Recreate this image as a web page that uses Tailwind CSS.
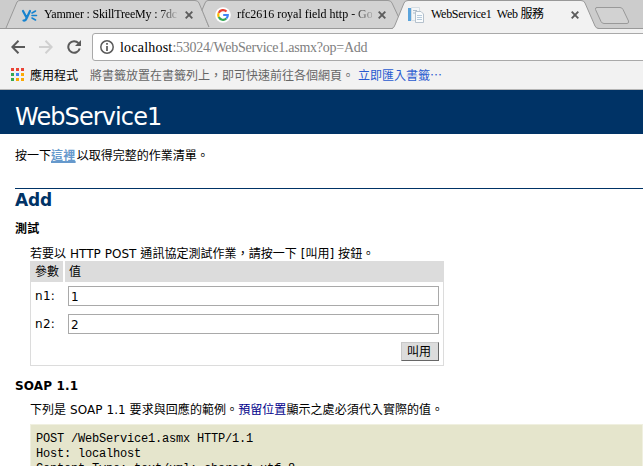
<!DOCTYPE html>
<html lang="zh-Hant">
<head>
<meta charset="utf-8">
<title>WebService1 Web 服務</title>
<script src="https://cdn.jsdelivr.net/npm/@tailwindcss/browser@4"></script>
</head>
<body class="w-[643px] h-[466px] overflow-hidden bg-white text-black whitespace-nowrap text-[12px] leading-[15px] font-['DejaVu_Sans','Noto_Sans_CJK_TC',sans-serif]">
<div class="h-[466px] overflow-hidden flex flex-col">
  <header class="shrink-0 h-[90px] bg-[#f2f2f2] border-b border-[#b6b6b6] font-['Liberation_Serif','Noto_Sans_CJK_TC',serif]">
    <div class="relative h-[29px]">
      <svg class="absolute inset-0" width="643" height="29" viewBox="0 0 643 29">
        <rect width="643" height="29" fill="#cccccc"/>
        <path d="M6 28L17 2Q18 .5 20 .5H195Q198 .5 199 3L209 27" fill="#d2d2d2" stroke="#999"/>
        <path d="M209 27L202 12L206 3L207 .5H388Q391 .5 392 3L402 28H209Z" fill="#d2d2d2"/>
        <path d="M209 27L202 10L205 3Q206 .5 208 .5H388Q391 .5 392 3L400 20" fill="none" stroke="#999"/>
        <path d="M0 28.5H393M597 28.5H643" stroke="#999"/>
        <path d="M392 29Q394 28 395 25L404 3Q405 .5 408 .5H581Q584 .5 585 3L595 26Q596 28.5 599 29Z" fill="#f2f2f2"/>
        <path d="M392 28.5Q394 28 395 25L404 3Q405 .5 408 .5H581Q584 .5 585 3L595 26Q596 28.5 599 28.5" fill="none" stroke="#999"/>
        <path d="M596.5 7.5H620Q622 7.5 623 9.500L628.500 21Q629 23.500 627 23.500H604Q602 23.500 601 21.500L595.500 9.500Q595 7.500 597 7.500Z" fill="#d2d2d2" stroke="#999"/>
      </svg>
      <div class="relative flex h-[29px] items-center">
        <svg class="ml-[21px] shrink-0" width="17" height="16" viewBox="0 0 17 16" fill="none" stroke="#1683cf" stroke-linecap="round">
          <path d="M2 4L5.500 10.500M9 4L5.500 11.500Q4.500 14 2.500 13.500" stroke-width="2.200"/>
          <path d="M11 6L14.500 4M11 8.500H15.500M11 11L14.500 13" stroke-width="1.600"/>
        </svg>
        <span class="ml-[6px] w-[135px] text-[12px] tracking-[-0.18px] bg-gradient-to-r from-black from-[82%] to-[#ccc] bg-clip-text text-transparent">Yammer : SkillTreeMy : 7dc</span>
        <svg class="ml-[6px] shrink-0" width="8" height="8" viewBox="0 0 8 8"><path d="M.7.700L7.300 7.300M7.300.700L.700 7.300" stroke="#5c5c5c" stroke-width="1.900"/></svg>
        <svg class="ml-[22px] shrink-0" width="16" height="16" viewBox="0 0 16 16">
          <circle cx="8" cy="8" r="7.800" fill="#fff"/>
          <g fill="none" stroke-width="2.200"><path d="M11.500 4.500A4.800 4.800 0 0 0 3.700 5.900" stroke="#ea4335"/><path d="M3.700 5.900A4.800 4.800 0 0 0 3.700 10.100" stroke="#fbbc05"/><path d="M3.700 10.100A4.800 4.800 0 0 0 11.300 11.500" stroke="#34a853"/><path d="M11.300 11.500Q12.900 10 12.800 8H8.200" stroke="#4285f4"/></g>
        </svg>
        <span class="ml-[6px] w-[135px] text-[12px] tracking-[-0.02px] bg-gradient-to-r from-black from-[82%] to-[#aaa] bg-clip-text text-transparent">rfc2616 royal field http - Go</span>
        <svg class="ml-[6px] shrink-0" width="8" height="8" viewBox="0 0 8 8"><path d="M.7.700L7.300 7.300M7.300.700L.700 7.300" stroke="#5c5c5c" stroke-width="1.900"/></svg>
        <svg class="ml-[22px] shrink-0" width="16" height="16" viewBox="0 0 16 16">
          <path d="M0 1H3V14H0Z" fill="#5ba4dc"/><path d="M3.500.500H11.500V13.500H3.500Z" fill="#f3f6f8" stroke="#d5dde3"/><path d="M5 3.500H9M5 6H7" stroke="#aebdca"/>
          <path d="M7.500 4.500H13L15.500 7V15.500H7.500Z" fill="#fafcfd" stroke="#b5c1cc"/><path d="M9 8.500H14M9 10.500H14M9 12.500H14" stroke="#b7cbdc"/>
        </svg>
        <span class="ml-[7px] w-[135px] text-[12px] tracking-[-0.28px]">WebService1&nbsp; Web 服務</span>
        <svg class="ml-[5px] shrink-0" width="8" height="8" viewBox="0 0 8 8"><path d="M.7.700L7.300 7.300M7.300.700L.700 7.300" stroke="#5c5c5c" stroke-width="1.900"/></svg>
      </div>
    </div>
    <div class="flex h-[36px] items-center pl-[11px]">
      <svg class="shrink-0" width="14" height="14" viewBox="0 0 14 14" fill="none" stroke="#5a5a5a" stroke-width="2"><path d="M14 7H1.500M7.500.800L1.300 7L7.500 13.200"/></svg>
      <svg class="ml-[14px] shrink-0" width="14" height="14" viewBox="0 0 14 14" fill="none" stroke="#d0d0d0" stroke-width="2"><path d="M0 7H12.500M6.500.800L12.700 7L6.500 13.200"/></svg>
      <svg class="ml-[14px] shrink-0" width="14" height="14" viewBox="0 0 14 14"><path d="M12.700 8.500A5.800 5.800 0 1 1 11.500 3.200" fill="none" stroke="#5a5a5a" stroke-width="2"/><path d="M14 0V6H8Z" fill="#5a5a5a"/></svg>
      <div class="ml-[11px] flex h-[28px] w-[570px] shrink-0 items-center rounded-l-[3px] border border-[#a9a9a9] bg-white pl-[7px]">
        <svg class="shrink-0" width="14" height="14" viewBox="0 0 14 14"><circle cx="7" cy="7" r="6.200" fill="none" stroke="#5a5a5a" stroke-width="1.500"/><path d="M7 3V4.700M7 6V11" stroke="#5a5a5a" stroke-width="1.700"/></svg>
        <span class="ml-[6px] text-[14px] tracking-[-0.25px] text-[#808080]"><span class="text-black tracking-[0.21px]">localhost</span>:53024/WebService1.asmx?op=Add</span>
      </div>
    </div>
    <div class="flex h-[18px] items-center pl-[11px] text-[12px] font-['Noto_Sans_CJK_TC',sans-serif]">
      <svg class="shrink-0" width="13" height="13" viewBox="0 0 13 13"><path d="M0 0h3v3H0zM5 0h3v3H5zM10 0h3v3h-3z" fill="#ea4335"/><path d="M0 5h3v3H0zM0 10h3v3H0z" fill="#34a853"/><path d="M5 5h3v3H5z" fill="#4285f4"/><path d="M10 5h3v3h-3zM5 10h3v3H5zM10 10h3v3h-3z" fill="#fbaa05"/></svg>
      <span class="ml-[6px]">應用程式</span>
      <span class="ml-[12px] text-[#666]">將書籤放置在書籤列上，即可快速前往各個網頁。</span>
      <span class="ml-[4px] text-[#2a5bd0]">立即匯入書籤…</span>
    </div>
  </header>

  <main class="shrink-0">
    <h1 class="h-[44px] bg-[#003366] pl-[15px] pt-[10px] text-[24px] leading-[34px] tracking-[-0.9px] text-white">WebService1</h1>
    <p class="mt-[14px] pl-[15px] h-[16px] leading-[17px]">按一下<a class="mr-px font-bold text-[#6699cc] underline decoration-2 tracking-[0.3px]">這裡</a>以取得完整的作業清單。</p>
    <section class="ml-[15px] mt-[24px] border-t border-[#003366]">
      <h2 class="h-[23px] text-[17px] leading-[23px] font-bold tracking-[-0.2px] text-[#003366]">Add</h2>
      <h3 class="mt-[8px] h-[16px] leading-[18px] font-bold tracking-[0.3px]">測試</h3>
      <div class="pl-[15px]">
        <p class="mt-[10px] h-[15px] leading-[17px] tracking-[0.04px]">若要以 HTTP POST 通訊協定測試作業，請按一下 [叫用] 按鈕。</p>
        <div class="mt-0 h-[105px] w-[414px] border border-t-0 border-[#dcdcdc]">
          <div class="-mx-px flex h-[21px] gap-[2px] leading-[22px]"><div class="w-[33px] bg-[#dcdcdc] pl-[5px]">參數</div><div class="flex-1 bg-[#dcdcdc] pl-[4px]">值</div></div>
          <div class="flex h-[28px] items-center pl-[4px]"><label class="w-[33px] pt-px tracking-[0.3px]">n1:</label><div class="h-[20px] w-[371px] border border-[#a9a9a9] pl-[2px] leading-[20px]">1</div></div>
          <div class="flex h-[28px] items-center pl-[4px]"><label class="w-[33px] pt-px tracking-[0.3px]">n2:</label><div class="h-[20px] w-[371px] border border-[#a9a9a9] pl-[2px] leading-[20px]">2</div></div>
          <div class="flex justify-end pr-[4px] pt-[4px]"><button class="h-[19px] w-[38px] border border-[#c8c8c8] border-r-[#666] border-b-[#666] bg-[#dcdcdc] pr-[2px] leading-[18px]">叫用</button></div>
        </div>
      </div>
      <h3 class="mt-[12px] h-[15px] leading-[17px] font-bold tracking-[0.15px]">SOAP 1.1</h3>
      <div class="pl-[15px]">
        <p class="mt-[9px] h-[15px] leading-[17px] tracking-[0.06px]">下列是 SOAP 1.1 要求與回應的範例。<span class="text-[#00008b]">預留位置</span>顯示之處必須代入實際的值。</p>
        <pre class="mt-[7px] border border-[#f0f0e0] bg-[#e5e5cc] px-[5px] pt-[7px] text-[12px] leading-[15px] tracking-[-0.2px] font-['Liberation_Mono',monospace]">POST /WebService1.asmx HTTP/1.1
Host: localhost
Content-Type: text/xml; charset=utf-8</pre>
      </div>
    </section>
  </main>
</div>
</body>
</html>
